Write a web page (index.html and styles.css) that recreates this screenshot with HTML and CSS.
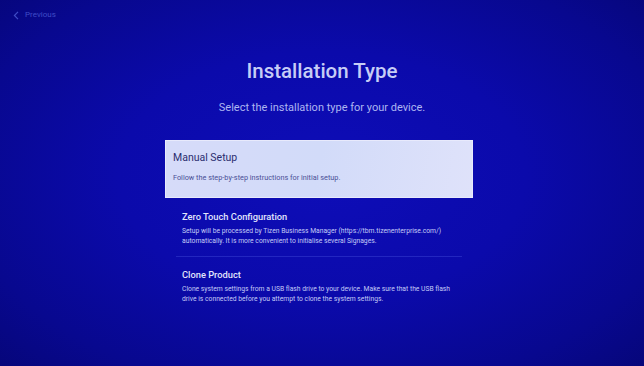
FILE: index.html
```html
<!DOCTYPE html>
<html lang="en">
<head>
    <meta charset="UTF-8">
    <meta name="viewport" content="width=device-width, initial-scale=1.0">
    <title>Installation Type</title>
    <link rel="stylesheet" href="styles.css">
</head>
<body>

    <!-- Back link -->
    <header class="topbar">
        <a class="back" href="#">
            <svg class="back-icon" width="6" height="9" viewBox="0 0 6 9">
                <path d="M5 0.8 L1.4 4.5 L5 8.2" fill="none" stroke="currentColor" stroke-width="1.2"/>
            </svg>
            <span>Previous</span>
        </a>
    </header>

    <main class="setup">
        <h1 class="title">Installation Type</h1>
        <p class="subtitle">Select the installation type for your device.</p>

        <!-- Options -->
        <ul class="options">
            <li class="option selected">
                <h2>Manual Setup</h2>
                <p>Follow the step-by-step instructions for initial setup.</p>
            </li>
            <li class="option">
                <h2>Zero Touch Configuration</h2>
                <p>Setup will be processed by Tizen Business Manager (https://tbm.tizenenterprise.com/) automatically. It is more convenient to initialise several Signages.</p>
            </li>
            <li class="option">
                <h2>Clone Product</h2>
                <p>Clone system settings from a USB flash drive to your device. Make sure that the USB flash drive is connected before you attempt to clone the system settings.</p>
            </li>
        </ul>
    </main>

</body>
</html>
```

FILE: styles.css
```css
html, body {
    height: 100%;
}

body {
    margin: 0;
    overflow: hidden;
    font-family: Roboto, "Noto Sans", sans-serif;
    background: radial-gradient(ellipse 70% 75% at 50% 48%, #0e0db8 0%, #0b0aab 45%, #08088f 80%, #06067a 100%);
    color: #d8ddfa;
}

.topbar {
    display: flex;
    padding: 9px 0 0 13px;
    height: 12px;
}

.back {
    display: flex;
    align-items: center;
    gap: 6px;
    color: #3f4cc6;
    text-decoration: none;
    font-size: 8px;
    line-height: 10px;
}

.back-icon {
    display: block;
}

.setup {
    width: 308px;
    margin: 0 0 0 calc(50% - 157px);
}

.title {
    margin: 37px 0 0;
    padding-left: 6px;
    text-align: center;
    font-size: 20.5px;
    line-height: 26px;
    font-weight: 500;
    color: #c6cdf6;
}

.subtitle {
    margin: 17px 0 0;
    padding-left: 6px;
    text-align: center;
    font-size: 11px;
    line-height: 14px;
    color: #aeb6f1;
}

.options {
    list-style: none;
    margin: 25px 0 0;
    padding: 0;
}

.option + .option {
    border-top: 1px solid rgba(70, 80, 220, 0.4);
    margin: 0 11px;
    padding: 11px 6px 10px;
}

.option.selected + .option {
    border-top: none;
    padding-top: 12px;
}

.option h2 {
    margin: 0;
    font-size: 9.3px;
    line-height: 14px;
    font-weight: 500;
    color: #e2e5fc;
}

.option p {
    margin: 3px 0 0;
    font-size: 6.75px;
    line-height: 9.5px;
    color: #c4cbf6;
}

.option.selected {
    background: linear-gradient(100deg, #d6dbf9 0%, #d2dbf9 50%, #dfe2fa 100%);
    border: 1px solid #e8eafc;
    padding: 9px 7px 11px;
    height: 36px;
}

.option.selected h2 {
    font-size: 10.5px;
    line-height: 15px;
    font-weight: 400;
    color: #2b2e70;
}

.option.selected p {
    margin-top: 8px;
    font-size: 7.3px;
    color: #4b5096;
}
```
